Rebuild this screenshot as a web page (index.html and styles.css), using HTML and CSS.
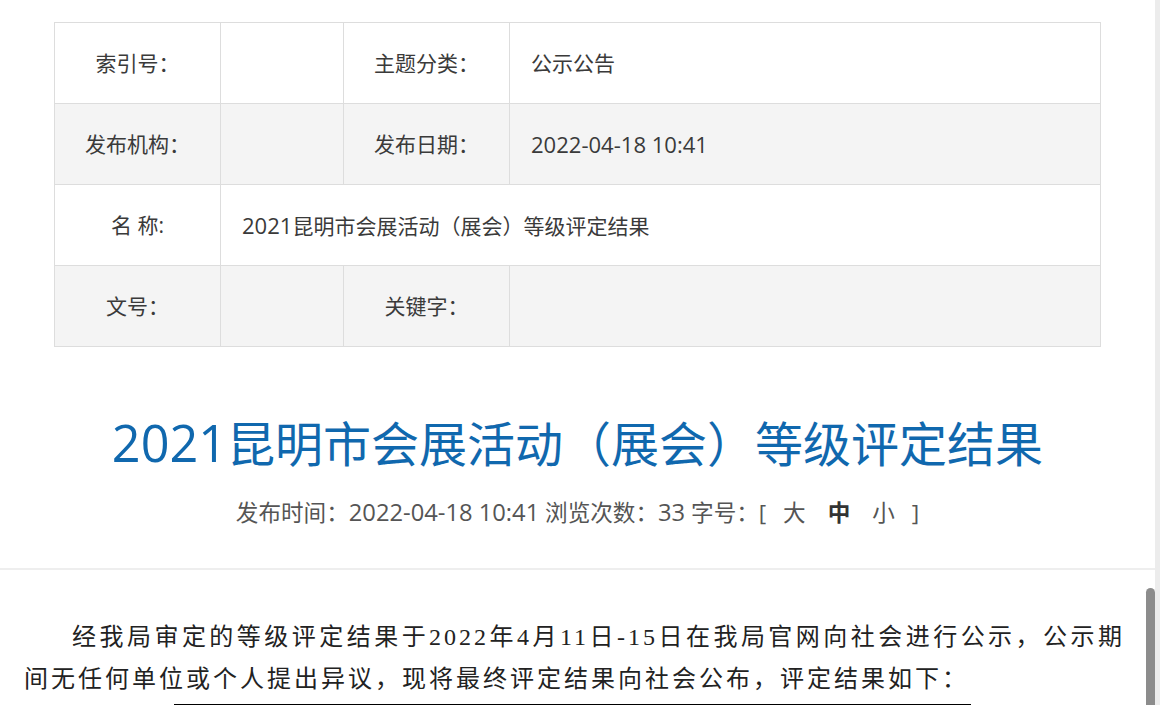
FILE: index.html
```html
<!DOCTYPE html>
<html lang="zh-CN">
<head>
<meta charset="utf-8">
<title>2021昆明市会展活动（展会）等级评定结果</title>
<link rel="stylesheet" href="styles.css">
</head>
<body>
<div class="window">
  <div class="page">
    <header class="doc-head">
      <table class="info-table">
        <colgroup><col class="c1"><col class="c2"><col class="c3"><col class="c4"></colgroup>
        <tr>
          <th>索引号：</th><td></td>
          <th>主题分类：</th><td>公示公告</td>
        </tr>
        <tr class="alt">
          <th>发布机构：</th><td></td>
          <th>发布日期：</th><td><span class="num">2022-04-18 10:41</span></td>
        </tr>
        <tr>
          <th>名 称:</th><td colspan="3"><span class="num">2021</span>昆明市会展活动（展会）等级评定结果</td>
        </tr>
        <tr class="alt">
          <th>文号：</th><td></td>
          <th>关键字：</th><td></td>
        </tr>
      </table>
      <h1 class="doc-title"><span class="num">2021</span>昆明市会展活动（展会）等级评定结果</h1>
      <div class="doc-meta">发布时间：<span class="num">2022-04-18 10:41</span> 浏览次数：<span class="num">33</span> 字号：[ <a class="fs">大</a><a class="fs cur">中</a><a class="fs">小</a> ]</div>
    </header>
    <div class="article">
      <div class="article-body">
        <p class="lead">经我局审定的等级评定结果于2022年4月11日-15日在我局官网向社会进行公示，公示期间无任何单位或个人提出异议，现将最终评定结果向社会公布，评定结果如下：</p>
        <div class="result-table"></div>
      </div>
      <div class="rail"><div class="thumb"></div></div>
    </div>
  </div>
  <div class="edge"></div>
</div>
</body>
</html>
```
FILE: styles.css
```css
html, body {
  margin: 0;
  height: 100%;
  overflow: hidden;
  background: #fff;
}
body {
  font-family: "Open Sans", "Noto Sans CJK SC", sans-serif;
  color: #3a3a3a;
}
.window {
  display: flex;
  height: 705px;
}
.page {
  flex: 1;
  min-width: 0;
  display: flex;
  flex-direction: column;
}
.edge {
  width: 5px;
  flex-shrink: 0;
  background: #ececec;
}
.doc-head {
  flex-shrink: 0;
  padding: 22px 0 37px;
  border-bottom: 2px solid #eeeeee;
}
.info-table {
  width: 1046px;
  margin-left: 54px;
  border-collapse: collapse;
  table-layout: fixed;
  font-size: 21px;
  line-height: 30px;
  color: #3a3a3a;
}
.c1 { width: 166px; }
.c2 { width: 123px; }
.c3 { width: 166px; }
.c4 { width: 591px; }
.info-table tr {
  height: 81px;
}
.info-table th,
.info-table td {
  border: 1px solid #dddddd;
  padding: 0;
  vertical-align: middle;
}
.info-table th {
  font-weight: normal;
  text-align: center;
}
.info-table td {
  text-align: left;
  padding-left: 21px;
}
.info-table .alt {
  background: #f4f4f4;
}
.num {
  font-size: 1.05em;
}
.doc-title {
  margin: 66px 0 0;
  font-size: 48px;
  line-height: 60px;
  font-weight: normal;
  color: #1068ae;
  text-align: center;
}
.doc-meta {
  margin-top: 20px;
  font-size: 22.6px;
  line-height: 36px;
  color: #555555;
  text-align: center;
}
.fs {
  padding: 0 11px;
  color: #555555;
}
.fs.cur {
  font-weight: bold;
  color: #333333;
}
.article {
  flex-shrink: 0;
  display: flex;
  height: 640px;
}
.article-body {
  flex: 1;
  min-width: 0;
  padding: 46px 21px 0 24px;
}
.rail {
  width: 9px;
  flex-shrink: 0;
  padding-top: 18px;
}
.thumb {
  height: 520px;
  background: #8c8c8c;
  border-radius: 5px 5px 0 0;
}
.lead {
  margin: 0 0 4px;
  font-family: "Liberation Serif", "Noto Sans CJK SC", serif;
  font-size: 24px;
  line-height: 42px;
  letter-spacing: 3px;
  text-indent: 2em;
  text-align: justify;
  color: #222222;
}
.result-table {
  width: 797px;
  height: 600px;
  margin-left: 150px;
  border: 1px solid #000;
  box-sizing: border-box;
}
```
